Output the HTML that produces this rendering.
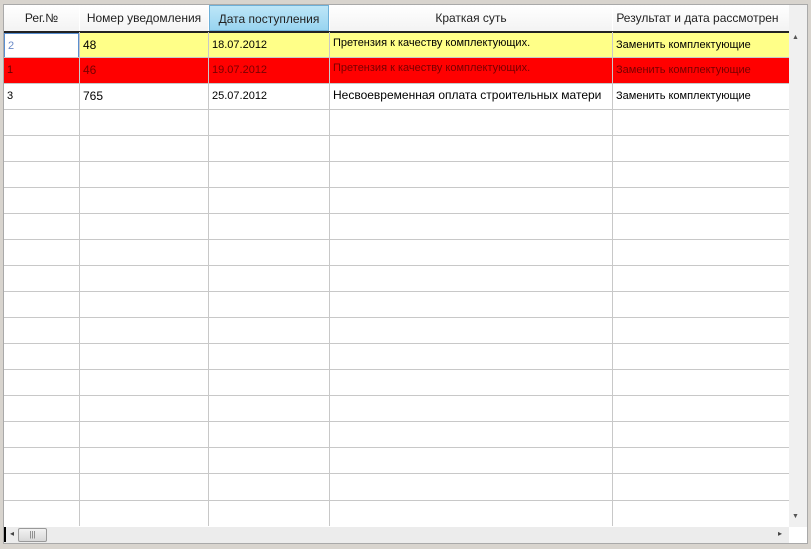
<!DOCTYPE html><html><head><style>
body{margin:0;width:811px;height:549px;background:#d8d4ce;position:relative;overflow:hidden;font-family:"Liberation Sans",sans-serif;}
#f{position:absolute;left:3px;top:4px;width:805px;height:540px;background:#fff;border:1px solid #a9a9a9;box-sizing:border-box;}
.h{position:absolute;top:5px;height:26px;font-size:12px;color:#222;text-align:center;line-height:26px;background:linear-gradient(#fff,#f3f3f3);white-space:nowrap;overflow:hidden;}
.vl{position:absolute;top:32px;width:1px;height:494px;background:#c8c8c8;}
.hl{position:absolute;left:4px;width:785px;height:1px;background:#c8c8c8;}
.r{position:absolute;left:4px;width:785px;height:25px;}
.c{position:absolute;top:0;height:25px;line-height:25px;padding-left:3px;white-space:nowrap;overflow:hidden;color:#000;box-sizing:border-box;}
</style></head><body>
<div id="f"></div>
<div class="h" style="left:4px;width:75px">Рег.№</div>
<div class="h" style="left:80px;width:128px">Номер уведомления</div>
<div class="h" style="left:209px;width:120px;background:linear-gradient(#bde6f8,#98d4f0);border:1px solid #6eb0d8;box-sizing:border-box">Дата поступления</div>
<div class="h" style="left:330px;width:282px">Краткая суть</div>
<div class="h" style="left:613px;width:176px;text-align:left">&nbsp;Результат и дата рассмотрен</div>
<div style="position:absolute;left:4px;top:31px;width:785px;height:2px;background:#222"></div>
<div class="r" style="top:33px;background:#ffff88">
 <div class="c" style="left:0;width:75px;background:#fff;border:1px solid #5a8fd0;color:#6a8ac8;font-size:11px">2</div>
 <div class="c" style="left:76px;font-size:12px">48</div>
 <div class="c" style="left:205px;font-size:11px">18.07.2012</div>
 <div class="c" style="left:326px;font-size:11px;line-height:20px">Претензия к качеству комплектующих.</div>
 <div class="c" style="left:609px;font-size:11px">Заменить комплектующие</div>
</div>
<div class="r" style="top:58px;background:#ff0000">
 <div class="c" style="left:0;font-size:11px;color:#600">1</div>
 <div class="c" style="left:76px;font-size:12px;color:#700">46</div>
 <div class="c" style="left:205px;font-size:11px;color:#700">19.07.2012</div>
 <div class="c" style="left:326px;font-size:11px;line-height:20px;color:#700">Претензия к качеству комплектующих.</div>
 <div class="c" style="left:609px;font-size:11px;color:#700">Заменить комплектующие</div>
</div>
<div class="r" style="top:84px">
 <div class="c" style="left:0;font-size:11px">3</div>
 <div class="c" style="left:76px;font-size:12px">765</div>
 <div class="c" style="left:205px;font-size:11px">25.07.2012</div>
 <div class="c" style="left:326px;font-size:12px;line-height:22px;width:282px">Несвоевременная оплата строительных матери</div>
 <div class="c" style="left:609px;font-size:11px">Заменить комплектующие</div>
</div>
<div class="vl" style="left:79px"></div><div class="vl" style="left:208px"></div><div class="vl" style="left:329px"></div><div class="vl" style="left:612px"></div>
<div class="hl" style="top:57px"></div><div class="hl" style="top:83px"></div><div class="hl" style="top:109px"></div><div class="hl" style="top:135px"></div><div class="hl" style="top:161px"></div><div class="hl" style="top:187px"></div><div class="hl" style="top:213px"></div><div class="hl" style="top:239px"></div><div class="hl" style="top:265px"></div><div class="hl" style="top:291px"></div><div class="hl" style="top:317px"></div><div class="hl" style="top:343px"></div><div class="hl" style="top:369px"></div><div class="hl" style="top:395px"></div><div class="hl" style="top:421px"></div><div class="hl" style="top:447px"></div><div class="hl" style="top:473px"></div><div class="hl" style="top:500px"></div>
<div style="position:absolute;left:789px;top:5px;width:18px;height:522px;background:#f0f0f0"></div>
<div style="position:absolute;left:792px;top:34px;font-size:7px;color:#555">▲</div>
<div style="position:absolute;left:792px;top:513px;font-size:7px;color:#555">▼</div>
<div style="position:absolute;left:4px;top:527px;width:785px;height:16px;background:#ececec"></div>
<div style="position:absolute;left:4px;top:527px;width:2px;height:15px;background:#000"></div>
<div style="position:absolute;left:10px;top:529px;font-size:8px;color:#444">◂</div>
<div style="position:absolute;left:778px;top:529px;font-size:8px;color:#444">▸</div>
<div style="position:absolute;left:18px;top:528px;width:29px;height:14px;background:linear-gradient(#f2f2f2,#d8d8d8);border:1px solid #999;border-radius:2px;box-sizing:border-box;font-size:8px;text-align:center;line-height:12px;color:#666">|||</div>
</body></html>
